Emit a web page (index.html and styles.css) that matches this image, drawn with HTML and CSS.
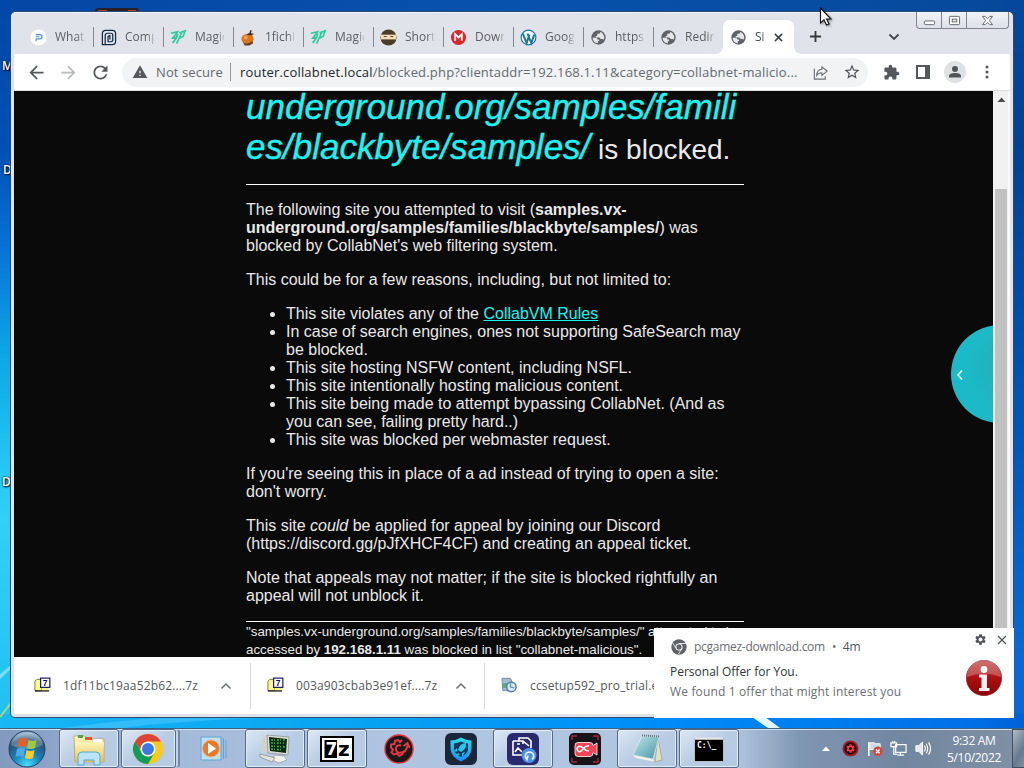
FILE: index.html
```html
<!DOCTYPE html>
<html lang="en">
<head>
<meta charset="utf-8">
<title>Site blocked</title>
<link rel="stylesheet" href="styles.css">
</head>
<body>
<svg class="defs" aria-hidden="true">
  <defs>
    <linearGradient id="folder" x1="0" y1="0" x2="0" y2="1"><stop offset="0" stop-color="#fff6b8"/><stop offset="1" stop-color="#e3c35c"/></linearGradient>
    <linearGradient id="steel" x1="0" y1="0" x2="1" y2="1"><stop offset="0" stop-color="#c3e7ea"/><stop offset="1" stop-color="#4596a5"/></linearGradient>
    <linearGradient id="shield" x1="0" y1="0" x2="0" y2="1"><stop offset="0" stop-color="#28e0e8"/><stop offset="1" stop-color="#168cf5"/></linearGradient>
    <radialGradient id="orb" cx=".5" cy=".95" r=".9"><stop offset="0" stop-color="#48e1ff"/><stop offset=".4" stop-color="#1787bd"/><stop offset=".8" stop-color="#294f76"/><stop offset="1" stop-color="#8eb1cb"/></radialGradient>
    <linearGradient id="red" x1="0" y1="0" x2="0" y2="1"><stop offset="0" stop-color="#c33b3b"/><stop offset=".55" stop-color="#a90d10"/><stop offset="1" stop-color="#8c0507"/></linearGradient>
    <symbol id="globe" viewBox="0 0 24 24"><circle cx="12" cy="12" r="11.500" fill="#5f6368"/><path d="M2.500 12.500h5q2.500 0 3 2.500h2.500v2.500h-2v3.800C6 21 2.500 17 2.500 12.500zM15 3l-1.500 3H10v3.500H7.500V12H13q2 0 2 2.500h4q1 0 1.500 1.500C22.500 10 20 5 15 3z" fill="#e5e6e8"/></symbol>
    <symbol id="zp" viewBox="0 0 18 18"><path d="M1 4.500L8 3 3 9.500 7 9 3 15M8.500 5L5 12l-2 2M10 4l6-2-2 5.500-5 3M12.500 3L10 9l-3 6.500" fill="none" stroke="#2fc99a" stroke-width="1.700"/></symbol>
    <symbol id="zip" viewBox="0 0 18 16"><path d="M1 4l2-2h5v12H1z" fill="#fafa8a" stroke="#77773a"/><path d="M8 9h7v5H8z" fill="#f5f580"/><path d="M1 14.300h15" stroke="#222" stroke-width="1.400"/><rect x="7" y=".7" width="9.800" height="9.800" fill="#fff" stroke="#101060" stroke-width="1.200"/><text x="9.300" y="9" class="seven">7</text></symbol>
    <symbol id="gear" viewBox="0 0 24 24"><path d="M19.140 12.940c.04-.3.06-.61.06-.94 0-.32-.02-.64-.07-.94l2.030-1.580c.18-.14.23-.41.12-.61l-1.920-3.320c-.12-.22-.37-.29-.59-.22l-2.390.96c-.5-.38-1.030-.7-1.620-.94l-.36-2.540c-.04-.24-.24-.41-.48-.41h-3.840c-.24 0-.43.17-.47.41l-.36 2.540c-.59.24-1.130.57-1.620.94l-2.390-.96c-.22-.08-.47 0-.59.22L2.740 8.870c-.12.21-.08.47.12.61l2.030 1.580c-.05.3-.09.63-.09.94s.02.64.07.94l-2.030 1.580c-.18.14-.23.41-.12.61l1.920 3.320c.12.22.37.29.59.22l2.390-.96c.5.38 1.030.7 1.620.94l.36 2.540c.05.24.24.41.48.41h3.840c.24 0 .44-.17.47-.41l.36-2.540c.59-.24 1.130-.56 1.620-.94l2.390.96c.22.08.47 0 .59-.22l1.920-3.320c.12-.22.07-.47-.12-.61l-2.010-1.580zM12 15.600c-1.980 0-3.600-1.620-3.600-3.600s1.620-3.600 3.600-3.600 3.600 1.620 3.600 3.600-1.620 3.600-3.600 3.600z"/></symbol>
  </defs>
</svg>
<div class="desktop">
  <svg class="wallpaper" viewBox="0 0 1024 768"><path d="M95 13v-2q0-3 4-3h36q4 0 4 3v2" fill="#2b2025"/><path d="M98 11h9M128 11h8" stroke="#d94b32" stroke-width="1.500"/><path d="M0 674l11-9v4L0 679z" fill="#a8eeff" opacity=".6"/><path d="M0 717l11-14" stroke="#a5dc76" stroke-width="2"/><path d="M62 728q60-8 110-11h110q-110 4-160 11z" fill="#66d2ff" opacity=".4"/><path d="M752 717h13l15 11h-12z" fill="#e4f7ff"/></svg>
  <span class="label label-a">M</span>
  <span class="label label-b">D</span>
  <span class="label label-c">D</span>

  <main class="window">
    <div class="tabstrip">
      <div class="tab"><svg class="fav" viewBox="0 0 18 18"><circle cx="9" cy="9" r="8.500" fill="#fff"/><path d="M6 6h4.500a2 2 0 010 4.500H6M6 8.200h4M6.500 10.500V13" fill="none" stroke="#4a90cf" stroke-width="1.200"/></svg><span class="tab-title">What</span></div>
      <div class="tab"><svg class="fav" viewBox="0 0 18 18"><path d="M6 1.500h7q3.500 0 3.500 3.500v8q0 3.500-3.500 3.500H2.500V5q0-3.500 3.500-3.500M5.500 16V7q0-2.500 2.500-2.500h3.500q2 0 2 2v5q0 2-2 2h-3v-5q0-1.500 2-1.500V11" fill="none" stroke="#15293f" stroke-width="1.300"/></svg><span class="tab-title">Comp</span></div>
      <div class="tab"><svg class="fav"><use href="#zp"/></svg><span class="tab-title">Magic</span></div>
      <div class="tab"><svg class="fav" viewBox="0 0 18 18"><ellipse cx="8" cy="10.500" rx="6.500" ry="5.500" fill="#d9761c"/><path d="M3 14q5 3 10-1l1 2-4 2.500H5z" fill="#6b3c1c"/><path d="M7 6l3-2 1-3 1.500.5-1 3L15 5l-3 2z" fill="#4a2e1c"/><circle cx="6" cy="9" r="2" fill="#f4a750"/></svg><span class="tab-title">1fichier</span></div>
      <div class="tab"><svg class="fav"><use href="#zp"/></svg><span class="tab-title">Magic</span></div>
      <div class="tab"><svg class="fav" viewBox="0 0 18 18"><circle cx="9" cy="9" r="8.500" fill="#4b3d2a"/><path d="M1 6h16v5H1z" fill="#f2deb5"/><path d="M4 8h3M11 8h3" stroke="#4b3d2a"/></svg><span class="tab-title">Short</span></div>
      <div class="tab"><svg class="fav" viewBox="0 0 18 18"><circle cx="9" cy="9" r="8" fill="#d9272e"/><path d="M5.500 12.500v-7L9 9l3.500-3.500v7" fill="none" stroke="#fff" stroke-width="2"/></svg><span class="tab-title">Down</span></div>
      <div class="tab"><svg class="fav" viewBox="0 0 18 18"><circle cx="9" cy="9" r="7.800" fill="#eef6fa" stroke="#20769b" stroke-width="1.200"/><path d="M3 5l4 10 3-9M8 5l4 10 3-9" fill="none" stroke="#20769b" stroke-width="2"/></svg><span class="tab-title">Goog</span></div>
      <div class="tab"><svg class="fav globe"><use href="#globe"/></svg><span class="tab-title">https:</span></div>
      <div class="tab tab-last"><svg class="fav globe"><use href="#globe"/></svg><span class="tab-title">Redire</span></div>
      <div class="tab tab-active"><svg class="fav globe"><use href="#globe"/></svg><span class="tab-title tab-title-short">Site</span><svg class="tab-close" viewBox="0 0 10 10"><path d="M1 1l8 8M9 1L1 9" stroke="#3c4043" stroke-width="1.700"/></svg></div>
      <svg class="newtab" viewBox="0 0 14 14"><path d="M7 1v12M1 7h12" stroke="#35383b" stroke-width="2"/></svg>
      <svg class="tabsearch" viewBox="0 0 12 8"><path d="M1.500 1.500L6 6l4.500-4.500" fill="none" stroke="#44474b" stroke-width="1.900"/></svg>
      <div class="winctl">
        <span><svg viewBox="0 0 14 12"><rect x="1.500" y="6.500" width="11" height="4" rx="1" fill="#fff" stroke="#5b6069"/></svg></span>
        <span><svg viewBox="0 0 14 12"><rect x="1.500" y="1.500" width="11" height="9" rx="1" fill="#fff" stroke="#5b6069"/><rect x="4.500" y="4.500" width="5" height="3" fill="#eee" stroke="#5b6069"/></svg></span>
        <span><svg viewBox="0 0 14 12"><path d="M1.500 1.500h3L7 4l2.500-2.500h3L9 6l3.500 4.500h-3L7 8l-2.500 2.500h-3L5 6z" fill="#fff" stroke="#5b6069"/></svg></span>
      </div>
    </div>

    <div class="toolbar">
      <span class="tool"><svg viewBox="0 0 24 24" width="21" height="21" fill="#54585c"><path d="M20 11H7.830l5.590-5.590L12 4l-8 8 8 8 1.410-1.410L7.830 13H20v-2z"/></svg></span>
      <span class="tool"><svg viewBox="0 0 24 24" width="21" height="21" fill="#babcbe"><path d="M4 11h12.170l-5.590-5.590L12 4l8 8-8 8-1.410-1.410L16.170 13H4v-2z"/></svg></span>
      <span class="tool"><svg viewBox="0 0 24 24" width="21" height="21" fill="#54585c"><path d="M17.650 6.350C16.200 4.900 14.210 4 12 4c-4.420 0-7.990 3.580-7.990 8s3.570 8 7.990 8c3.730 0 6.840-2.550 7.730-6h-2.080c-.82 2.330-3.040 4-5.650 4-3.310 0-6-2.690-6-6s2.690-6 6-6c1.660 0 3.140.69 4.220 1.780L13 11h7V4l-2.350 2.350z"/></svg></span>
      <div class="omnibox">
        <svg class="warn" viewBox="0 0 24 24" fill="#54585c"><path d="M1 21h22L12 2 1 21zm12-3h-2v-2h2v2zm0-4h-2v-4h2v4z"/></svg>
        <span class="notsecure">Not secure</span>
        <span class="url"><b>router.collabnet.local</b>/blocked.php?clientaddr=192.168.1.11&amp;category=collabnet-malicio...</span>
        <span class="tool"><svg viewBox="0 0 18 18" width="17" height="17" fill="none" stroke="#6a6e73" stroke-width="1.200"><path d="M2.500 5v11h11.500v-3M10.500 3l5.500 4.500-5.500 4.500V9.500Q7 9 5 12q0-6 5.500-6.500z"/></svg></span>
        <span class="tool"><svg viewBox="0 0 24 24" width="18" height="18" fill="#505458"><path d="M22 9.240l-7.190-.62L12 2 9.190 8.630 2 9.240l5.460 4.730L5.820 21 12 17.270 18.180 21l-1.630-7.030L22 9.240zM12 15.400l-3.760 2.270 1-4.280-3.320-2.880 4.380-.38L12 6.100l1.710 4.040 4.380.38-3.320 2.880 1 4.280L12 15.400z"/></svg></span>
      </div>
      <span class="tool"><svg viewBox="0 0 24 24" width="17" height="17" fill="#54585c"><path d="M20.500 11H19V7c0-1.100-.9-2-2-2h-4V3.500C13 2.120 11.880 1 10.500 1S8 2.120 8 3.500V5H4c-1.100 0-1.990.9-1.990 2v3.800H3.500c1.490 0 2.700 1.210 2.700 2.700s-1.210 2.700-2.700 2.700H2V20c0 1.100.9 2 2 2h3.800v-1.500c0-1.490 1.210-2.700 2.700-2.700 1.490 0 2.700 1.210 2.700 2.700V22H17c1.100 0 2-.9 2-2v-4h1.500c1.380 0 2.500-1.120 2.500-2.500S21.880 11 20.500 11z"/></svg></span>
      <span class="tool"><svg viewBox="0 0 14 14" width="14" height="14"><rect x="1" y="1" width="12" height="12" fill="#fff" stroke="#54585c" stroke-width="2"/><path d="M9 1h4v12H9z" fill="#54585c"/></svg></span>
      <span class="tool"><svg viewBox="0 0 22 22" width="22" height="22"><circle cx="11" cy="11" r="11" fill="#dee1e6"/><circle cx="11" cy="8" r="3" fill="#505458"/><path d="M5 16.500v-1.500q0-3 6-3t6 3v1.500z" fill="#505458"/></svg></span>
      <span class="tool"><svg viewBox="0 0 4 14" width="4" height="14" fill="#54585c"><circle cx="2" cy="2" r="1.500"/><circle cx="2" cy="7" r="1.500"/><circle cx="2" cy="12" r="1.500"/></svg></span>
    </div>

    <div class="viewport">
      <div class="page">
        <article class="blocked">
          <h1><em>underground.org/samples/famili<br>es/blackbyte/samples/</em> is blocked.</h1>
          <hr>
          <p>The following site you attempted to visit (<strong>samples.vx-<br>underground.org/samples/families/blackbyte/samples/</strong>) was<br>blocked by CollabNet's web filtering system.</p>
          <p>This could be for a few reasons, including, but not limited to:</p>
          <ul>
            <li>This site violates any of the <a href="#rules">CollabVM Rules</a></li>
            <li>In case of search engines, ones not supporting SafeSearch may<br>be blocked.</li>
            <li>This site hosting NSFW content, including NSFL.</li>
            <li>This site intentionally hosting malicious content.</li>
            <li>This site being made to attempt bypassing CollabNet. (And as<br>you can see, failing pretty hard..)</li>
            <li>This site was blocked per webmaster request.</li>
          </ul>
          <p>If you're seeing this in place of a ad instead of trying to open a site:<br>don't worry.</p>
          <p>This site <i>could</i> be applied for appeal by joining our Discord<br>(https://discord.gg/pJfXHCF4CF) and creating an appeal ticket.</p>
          <p>Note that appeals may not matter; if the site is blocked rightfully an<br>appeal will not unblock it.</p>
          <hr class="end">
          <footer>"samples.vx-underground.org/samples/families/blackbyte/samples/" attempted to be<br>accessed by <strong>192.168.1.11</strong> was blocked in list "collabnet-malicious".</footer>
        </article>
        <div class="bubble"><svg viewBox="0 0 8 12"><path d="M6 1.500L2 6l4 4.500" fill="none" stroke="#d8fbfb" stroke-width="1.700"/></svg></div>
      </div>
      <div class="scrollbar"><svg viewBox="0 0 15 17"><path d="M4.500 11l4-4.500 4 4.500z" fill="#4b4b4b"/></svg><div class="thumb"></div></div>
    </div>

    <div class="downloads">
      <div class="download"><svg class="file"><use href="#zip"/></svg><span class="fname">1df11bc19aa52b62....7z</span><svg class="caret" viewBox="0 0 12 8"><path d="M1.500 6.500L6 2l4.500 4.500" fill="none" stroke="#6d7073" stroke-width="1.500"/></svg></div>
      <div class="download"><svg class="file"><use href="#zip"/></svg><span class="fname">003a903cbab3e91ef....7z</span><svg class="caret" viewBox="0 0 12 8"><path d="M1.500 6.500L6 2l4.500 4.500" fill="none" stroke="#6d7073" stroke-width="1.500"/></svg></div>
      <div class="download"><svg class="file" viewBox="0 0 18 16"><path d="M1 1h9l2 4v9H2z" fill="#a6bdd0" stroke="#6f8da5"/><path d="M2 6h5v5H2z" fill="#57a78a"/><circle cx="11" cy="10" r="5" fill="#d9e8f5" stroke="#4c78a6" stroke-width="1.500"/><path d="M10 4v6l4 1" fill="none" stroke="#6f9abf" stroke-width="1.500"/></svg><span class="fname">ccsetup592_pro_trial.exe</span></div>
    </div>
  </main>

  <svg class="cursor" viewBox="0 0 14 20"><path d="M1.500 1v15l3.500-3.200L7.500 18l2.500-1-2.400-5H12z" fill="#fff" stroke="#111" stroke-width="1.100"/></svg>

  <aside class="toast">
    <div class="toast-head">
      <svg class="toast-app" viewBox="0 0 16 16"><circle cx="8" cy="8" r="7.700" fill="#5f6368"/><circle cx="8" cy="8" r="3.200" fill="#5f6368" stroke="#fff"/><path d="M8 4.500h7M5 9.500L1.800 4M11 9.500L7.500 15" stroke="#fff" stroke-width=".8"/></svg>
      <span class="origin">pcgamez-download.com</span><span class="dot">•</span><span class="age">4m</span>
      <svg class="toast-gear" fill="#505458"><use href="#gear"/></svg>
      <svg class="toast-close" viewBox="0 0 10 10"><path d="M1 1l8 8M9 1L1 9" stroke="#505458" stroke-width="1.200"/></svg>
    </div>
    <div class="toast-body">
      <div><div class="toast-title">Personal Offer for You.</div><div class="toast-text">We found 1 offer that might interest you</div></div>
      <svg class="info" viewBox="0 0 36 36"><circle cx="18" cy="18" r="17.700" fill="url(#red)" stroke="#7c1a1c" stroke-width=".6"/><path d="M1 17a17 17 0 0134 0q-17-7-34 0z" fill="#fff" opacity=".25"/><circle cx="18" cy="9.500" r="3.400" fill="#fff"/><path d="M13 14.500h8V28H23.500v3H13v-3h2.500V17.500H13z" fill="#f5efef"/></svg>
    </div>
  </aside>

  <nav class="taskbar">
    <svg class="start" viewBox="0 0 38 38"><circle cx="19" cy="19" r="18" fill="url(#orb)" stroke="#27415e"/><path d="M3 15a16.500 16.500 0 0132 0q-16 8-32 0z" fill="#fff" opacity=".25"/><path d="M11 9q4-2 8 0l-1.500 8q-4-2-8 0z" fill="#ee5b25"/><path d="M20.500 10q4 2 8 0l-1.500 8q-4 2-8 0z" fill="#9ccb3b"/><path d="M9 19q4-2 8 0l-1.500 8q-4-2-8 0z" fill="#4da9e8"/><path d="M18.500 20q4 2 8 0l-1.500 8q-4 2-8 0z" fill="#fcc92c"/></svg>
    <div class="apps">
      <span class="app open"><svg viewBox="0 0 34 34"><path d="M2 4h11l2 3h17v23H3z" fill="url(#folder)" stroke="#b99b46" stroke-width=".7"/><path d="M6 3h5v3H6z" fill="#4f9f55"/><path d="M13 5h7v3h-7z" fill="#df593e"/><path d="M21 7h9v3h-9z" fill="#fff"/><path d="M3 10h29l-1 20H4z" fill="url(#folder)"/><path d="M6 33V24q0-4 4-4h14q4 0 4 4v9h-6v-5H12v5z" fill="#b9e4f8" stroke="#53a9d7"/></svg></span>
      <span class="app open stack"><svg viewBox="0 0 34 34"><circle cx="17" cy="17" r="15" fill="#fbc916"/><path d="M4 9.500a15 15 0 0126 0H17a7.500 7.500 0 00-6.500 11.250z" fill="#db4437"/><path d="M4 9.500a15 15 0 0013 22.500l6.500-11.250a7.500 7.500 0 01-13 0z" fill="#0f9d58"/><circle cx="17" cy="17" r="7.500" fill="#fff"/><circle cx="17" cy="17" r="6" fill="#3b78e7"/></svg></span>
      <span class="app"><svg viewBox="0 0 34 34"><path d="M10 5h16v22H10z" fill="#86bfe3"/><path d="M5 5h20v23H5z" fill="#bfdff2" stroke="#5fa5d2"/><path d="M27.500 6v21M30 8v18" stroke="#5fa5d2"/><circle cx="15" cy="16.500" r="8.500" fill="#e7792b" stroke="#f4b27a"/><path d="M12 11l8 5.500-8 5.500z" fill="#fff"/></svg></span>
      <span class="app open"><svg viewBox="0 0 34 34"><path d="M4 6l6-3v16l-6 3z" fill="#d0d3cc"/><path d="M9 3l22 2-1 18-20-2z" fill="#d9ddd4" stroke="#888" stroke-width=".7"/><path d="M11 5l18 2-1 14-16-2z" fill="#0a2b12"/><path d="M13 8h14M13 11h13M13 14l14 1M13 17l12 1" fill="none" stroke="#36b74a" stroke-width="1.500" stroke-dasharray="2 1 1 2"/><path d="M17 23l9 1 3 4-8 3-7-3z" fill="#eef0ea" stroke="#888" stroke-width=".6"/><path d="M2 22l15 4-3 4-12-5z" fill="#e2e5df" stroke="#777" stroke-width=".6"/></svg></span>
      <span class="app open"><svg viewBox="0 0 34 34"><rect x="1" y="5" width="32" height="24" fill="#fff" stroke="#000" stroke-width="2"/><path d="M4.500 8h12.500v18H4.500z" fill="#000"/><text x="5.500" y="23" class="big7">7</text><text x="18" y="24" class="bigz">z</text></svg></span>
      <span class="app"><svg viewBox="0 0 34 34"><circle cx="17" cy="17" r="14" fill="#1c181a" stroke="#e0303b" stroke-width="1.400"/><path d="M20 8l-2 2-2-2-3 1-.5 3-3.500.5v3l2 2-1.500 3 2.500 2 3-1 2.500 2.500 3-2 .5-2.500" fill="none" stroke="#e53745" stroke-width="2"/><path d="M19 13.500q-5-1-5 3.500t5 3.500q5 0 6.500-7M21.500 14l4-3 2 5" fill="none" stroke="#e53745" stroke-width="2"/></svg></span>
      <span class="app"><svg viewBox="0 0 34 34"><rect x="1" y="1" width="32" height="32" rx="6" fill="#1b263a"/><path d="M17 5.500q5 3 10.500 3v8q0 8-10.500 13Q6.500 24.500 6.500 16.500v-8q5.500 0 10.500-3z" fill="url(#shield)"/><path d="M17 9.500q3 1.500 7 2v5q0 5-7 8.500-7-3.500-7-8.500v-5q4-.5 7-2z" fill="#173757"/><path d="M22 11q-6 0-8 7l3 2q6-3 5-9zM13 16l-3.500 3.500h4zM14 21l-2 4 4-3zM18 21v4l3-5z" fill="#25c6ef"/></svg></span>
      <span class="app open"><svg viewBox="0 0 34 34"><rect x="1" y="1" width="32" height="32" rx="6" fill="#29296f"/><path d="M13 9V6h9l3 3v7M7 9h10v3M7 9v14h9M17 9l6 5M9 20l3-4 4 4M11 12h3" fill="none" stroke="#fff" stroke-width="1.600"/><circle cx="23" cy="23.500" r="7.500" fill="#4b93e4"/><path d="M21 27.500a4.200 4.200 0 115 0M19 24l2 3.500 1-4" fill="none" stroke="#fff" stroke-width="1.500"/></svg></span>
      <span class="app"><svg viewBox="0 0 34 34"><rect x="1" y="1" width="32" height="32" rx="5" fill="#171317"/><path d="M4 8V4h5M25 4h5v4M4 26v4h5M25 30h5v-4" fill="none" stroke="#a42b3c" stroke-width="1.400"/><path d="M10 10.500h12q3 0 3 3l4-2.500v12l-4-2.500q0 4-3 4H10q-3 0-3-3v-8q0-3 3-3z" fill="#f04457" stroke="#fff" stroke-width=".8"/><path d="M21 14q-3-1-6 3t-5 2q-2-2 0-4t5 1 6 3" fill="none" stroke="#fff" stroke-width="1.500"/></svg></span>
      <span class="app open"><svg viewBox="0 0 34 34"><path d="M28 5l4 23-7 2z" fill="#e3e0c8" stroke="#968f70" stroke-width=".6"/><path d="M12 4l17 1-6 22-20-4z" fill="url(#steel)" stroke="#d8eff0" stroke-width=".7"/><path d="M3 23.500l20 4 1 2-18-3.500z" fill="#f5f5ef"/><path d="M12 3.500l17 1" stroke="#646d70" stroke-width="2" stroke-dasharray="1 1"/></svg></span>
      <span class="app open"><svg viewBox="0 0 34 34"><rect x="2.500" y="5.500" width="29" height="24" fill="#000" stroke="#ccd3da" stroke-width=".8"/><path d="M3 6.500h28" stroke="#e5e8eb" stroke-width="2.500"/><text x="5" y="16" class="prompt">C:\_</text></svg></span>
    </div>
    <div class="tray">
      <svg class="up" viewBox="0 0 8 5"><path d="M0 5l4-4.500L8 5z" fill="#fff"/></svg>
      <svg class="tr" viewBox="0 0 18 18"><circle cx="9" cy="9" r="8.500" fill="#a41b27"/><circle cx="9" cy="9" r="6.500" fill="#260b0e"/><use href="#gear" x="3.500" y="3.500" width="11" height="11" fill="#f03b44"/></svg>
      <svg class="tr" viewBox="0 0 18 18"><path d="M3 2v15" stroke="#fff" stroke-width="1.600"/><path d="M4 3h5l1 1h5v7H9L8 10H4z" fill="#ced6df" stroke="#fff"/><circle cx="12.500" cy="12" r="5" fill="#d74438"/><path d="M10.500 10l4 4M14.500 10l-4 4" stroke="#fff" stroke-width="1.500"/></svg>
      <svg class="tr" viewBox="0 0 18 18"><path d="M6 5h11v8H6zM8 16h7M11 13v3M1 3h6v4H1zM3 1v2M5 1v2M4 7v8h4" fill="none" stroke="#fff" stroke-width="1.300"/></svg>
      <svg class="tr" viewBox="0 0 18 18"><path d="M2 6h3l4-4v14l-4-4H2z" fill="#e5eaf0" stroke="#fff"/><path d="M11 6q2 3 0 6M13 4q3 5 0 10M15.500 2.500q4 6.500 0 13" fill="none" stroke="#fff" stroke-width="1.200"/></svg>
      <div class="clock"><span>9:32 AM</span><span>5/10/2022</span></div>
    </div>
    <div class="peek"></div>
  </nav>
</div>
</body>
</html>
```

FILE: styles.css
```css
* { box-sizing: border-box; }
body { margin: 0; overflow: hidden; font-family: "Open Sans", "Noto Sans", sans-serif; }
svg { display: block; flex: none; }
.defs { position: absolute; width: 0; height: 0; }

.desktop {
  position: relative; width: 1024px; height: 768px; overflow: hidden;
  background:
    linear-gradient(90deg, #18b7f5 0, #08a3f2 35%, #0090f8 60%, #0070e8 95%, #0060d5) 0 714px / 100% 54px no-repeat,
    linear-gradient(#05479d 0, #024291 20%, #0052ac 52%, #0b68d2 92%) 1005px 0 / 19px 714px no-repeat,
    linear-gradient(90deg, #0547a4, #0752ac 50%, #06499b) 12px 0 / 993px 14px no-repeat,
    linear-gradient(#0347a8 0, #0350b4 150px, #0873d6 250px, #0ba5e6 350px, #20c3f0 450px, #32d0f4 520px, #23c1f1 700px);
}
.wallpaper { position: absolute; inset: 0; width: 1024px; height: 768px; }
.label { position: absolute; color: #fff; font-size: 12px; font-weight: 600; line-height: 16px; text-shadow: 1px 1px 2px #000, 0 0 2px #000; }
.label-a { left: 2px; top: 58px; }
.label-b { left: 3px; top: 162px; }
.label-c { left: 2px; top: 474px; }

.window {
  position: absolute; left: 11px; top: 12px; width: 1002px; height: 705px;
  display: flex; flex-direction: column; padding: 0 3px 3px;
  background: #e0e3e9; border-radius: 5px 5px 4px 4px;
  box-shadow: 0 0 0 1px #2a4c72, inset 0 1px 0 #eef4fa;
}

/* tab strip */
.tabstrip { display: flex; height: 42px; padding: 8px 0 0 9px; flex: none; }
.tab { width: 70px; height: 34px; display: flex; align-items: center; padding-left: 7px; position: relative; color: #5c6065; flex: none; }
.tab:not(.tab-last):not(.tab-active)::after { content: ""; position: absolute; right: -1px; top: 7px; width: 1px; height: 20px; background: #85888e; }
.fav { width: 17px; height: 17px; margin-right: 8px; }
.fav.globe { width: 15px; height: 15px; margin: 0 9px 0 1px; }
.tab-title { width: 29px; overflow: hidden; white-space: nowrap; font-size: 12px; line-height: 18px; -webkit-mask-image: linear-gradient(90deg, #000 75%, #0003); mask-image: linear-gradient(90deg, #000 75%, #0003); }
.tab-title-short { width: 10px; margin-right: 9px; }
.tab-active { background: #fff; border-radius: 7px 7px 0 0; color: #45494d; width: 71px; }
.tab-active::before { content: ""; position: absolute; left: -7px; right: -7px; bottom: 0; height: 7px; background: radial-gradient(circle at 0 0, transparent 6.500px, #fff 7px) 0 0 / 7px 7px no-repeat, radial-gradient(circle at 100% 0, transparent 6.500px, #fff 7px) 100% 0 / 7px 7px no-repeat; }
.tab-close { width: 9px; height: 9px; }
.newtab { width: 13px; height: 13px; margin: 10px 0 0 15px; }
.tabsearch { width: 12px; height: 8px; margin: 13px 0 0 66px; }
.winctl { display: flex; width: 93px; height: 17px; margin: -8px 0 0 16px; border: 1px solid #80868f; border-top: 0; border-radius: 0 0 4px 4px; background: linear-gradient(#f0f3f7, #dde1e8); flex: none; }
.winctl span { width: 25px; display: flex; align-items: center; justify-content: center; border-right: 1px solid #80868f; }
.winctl span:last-child { width: 41px; border: 0; }
.winctl svg { width: 13px; height: 11px; }

/* toolbar */
.toolbar { display: flex; align-items: center; height: 37px; padding-left: 6px; background: #fff; border-bottom: 1px solid #dcdee0; flex: none; }
.tool { display: flex; width: 32px; height: 32px; align-items: center; justify-content: center; flex: none; }
.omnibox { display: flex; align-items: center; width: 746px; height: 29px; margin: 0 7px 0 6px; padding-left: 10px; border-radius: 15px; background: #f1f3f4; font-size: 13px; line-height: 20px; white-space: nowrap; color: #66696e; }
.warn { width: 16px; height: 16px; }
.notsecure { width: 75px; height: 18px; line-height: 18px; margin-left: 8px; border-right: 1px solid #94989c; letter-spacing: .1px; }
.url { width: 564px; margin-left: 9px; letter-spacing: .18px; }
.url b { color: #25282b; font-weight: 400; }

/* page */
.viewport { display: flex; height: 566px; flex: none; }
.page { position: relative; width: 979px; overflow: hidden; background: #0a0a0a; }
.blocked { width: 498px; margin: -4px 0 0 232px; color: #e8e8e8; font: 16px/18px "Liberation Sans", Arial, sans-serif; white-space: nowrap; }
.blocked h1 { margin: 0 0 17px; font-size: 28px; line-height: 34px; font-weight: 400; }
.blocked h1 em { font-size: 35px; line-height: 40px; color: #1df4f2; -webkit-text-stroke: .4px #1df4f2; }
.blocked hr { margin: 0 0 16px; border: 0; height: 1px; background: #fff; }
.blocked p { margin: 0 0 16px; }
.blocked ul { margin: 0 0 16px; padding-left: 40px; }
.blocked a { color: #1df4f2; }
.blocked hr.end { margin: 16px 0 1px; }
.blocked footer { font-size: 13.333px; line-height: 18px; }
.bubble { position: absolute; left: 937px; top: 234px; width: 98px; height: 98px; border-radius: 50%; background: radial-gradient(circle at 60px 45px, #22adb7, #1cbac8 45px); }
.bubble svg { width: 8px; height: 12px; margin: 44px 0 0 5px; }
.scrollbar { width: 17px; background: #f1f1f1; border-right: 2px solid #fafafa; }
.scrollbar svg { width: 15px; height: 17px; }
.thumb { height: 468px; margin: 81px 1px 0 2px; background: #c1c1c1; }

/* downloads shelf */
.downloads { display: flex; height: 57px; background: #fff; flex: none; }
.download { display: flex; align-items: center; width: 234px; height: 46px; margin-top: 6px; padding-left: 16px; border-right: 1px solid #d9dadb; color: #55585c; font-size: 12px; letter-spacing: .14px; white-space: nowrap; }
.download:first-child { width: 237px; padding-left: 20px; }
.download:last-child { border: 0; }
.file { width: 17px; height: 16px; margin: -3px 12px 0 0; }
.fname { width: 157px; line-height: 18px; }
.download:nth-child(2) .fname { width: 159px; }
.caret { width: 12px; height: 8px; }
.seven { font: bold 9px "Liberation Sans", sans-serif; fill: #101060; }

.cursor { position: absolute; left: 819px; top: 7px; width: 14px; height: 20px; filter: drop-shadow(1px 1px 1px #0006); }

/* notification */
.toast { position: absolute; left: 654px; top: 628px; width: 360px; height: 90px; padding: 10px 7px 0 16px; background: #fff; font-size: 12px; line-height: 18px; color: #6b6e72; white-space: nowrap; }
.toast-head { display: flex; height: 18px; align-items: center; }
.toast-app { width: 16px; height: 16px; margin: 0 7px 0 1px; }
.origin { width: 131px; letter-spacing: -.27px; }
.dot { width: 18px; padding-left: 7px; }
.dot + .age { color: #505458; }
.age { width: 134px; }
.toast-gear { width: 13px; height: 13px; margin: -15px 10px 0 0; }
.toast-close { width: 10px; height: 10px; margin-top: -15px; }
.toast-body { display: flex; justify-content: space-between; padding: 4px 5px 0 0; line-height: 20px; }
.toast-title { color: #303336; margin-top: 2px; }
.toast-text { letter-spacing: .15px; }
.info { width: 36px; height: 36px; }

/* taskbar */
.taskbar { position: absolute; left: 0; top: 728px; width: 1024px; height: 40px; display: flex; align-items: center; background: linear-gradient(90deg, #8199be 0, #8da5c9 58px, #a4bad9 180px, #afc4df 400px, #b1c6df 735px, #7f96b3 800px, #71869f 900px, #8091a5); border-top: 1px solid #3e6081; box-shadow: inset 0 1px 0 #d2e2f0; }
.start { width: 38px; height: 38px; margin-left: 8px; }
.apps { display: flex; width: 692px; height: 39px; margin-left: 13px; gap: 2px; flex: none; }
.app { width: 60px; height: 39px; display: flex; align-items: center; justify-content: center; border-radius: 3px; flex: none; }
.app.open { border: 1px solid #53698b; box-shadow: inset 0 0 0 1px #e2edf8; background: linear-gradient(145deg, #dce7f4, #b8cce4 50%, #b4cae3); }
.app.stack { width: 55px; margin-right: 5px; padding-right: 2px; box-shadow: inset 0 0 0 1px #e2edf8, 3px 0 0 -1px #c1d3e8, 5px 0 0 -1px #7087a5; }
.app svg { width: 34px; height: 34px; }
.big7 { font: bold 17px "DejaVu Sans", sans-serif; fill: #fff; }
.bigz { font: bold 20px "DejaVu Sans", sans-serif; fill: #000; }
.prompt { font: bold 8px "DejaVu Sans Mono", monospace; fill: #fff; }
.tray { display: flex; align-items: center; margin-left: 71px; flex: none; }
.up { width: 8px; height: 5px; margin-right: 12px; }
.tr { width: 17px; height: 17px; margin-right: 7px; }
.clock { width: 72px; display: flex; flex-direction: column; align-items: center; margin-left: 0; margin-right: 2px; color: #fff; font-size: 12px; line-height: 17px; letter-spacing: -.3px; }
.peek { width: 15px; height: 39px; margin-left: auto; border: 1px solid #3f5063; background: linear-gradient(120deg, #aebac7, #66798e 60%, #8595a6); flex: none; }
```
